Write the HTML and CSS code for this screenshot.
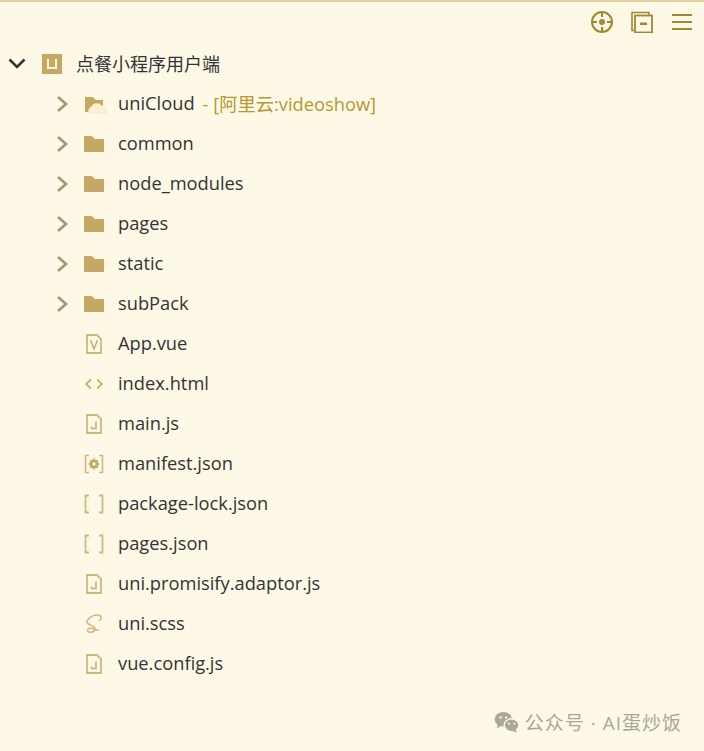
FILE: index.html
```html
<!DOCTYPE html>
<html lang="en">
<head>
    <meta charset="UTF-8">
    <meta name="viewport" content="width=device-width, initial-scale=1.0">
    <title>Project tree</title>
    <link rel="stylesheet" href="styles.css">
</head>
<body>

<svg class="defs" width="0" height="0">
    <symbol id="chev" viewBox="0 0 14 18"><path d="M3 2l8 7-8 7" fill="none" stroke="currentColor" stroke-width="2.6"/></symbol>
    <symbol id="folder" viewBox="0 0 20 16"><path d="M0 0h8l3 3h9v13H0z" fill="#c4a863"/></symbol>
    <symbol id="cloud" viewBox="0 0 24 24"><path d="M1 5h8l3 3h7v6H8v6H1z" fill="#c4a863"/><path d="M6.500 21c-2.500-.5-2.500-4.500 .5-5.500 1-4 8.500-5.500 10.500-1.500 3-.5 5 3 4.500 7z" fill="#fbf2d0" stroke="#f3e8c4"/></symbol>
    <symbol id="vue" viewBox="0 0 18 20"><path d="M2 1h10l4 4v14H2z" fill="none" stroke="#cfb87f" stroke-width="1.8"/><path d="M5.500 6l3.500 9 3.500-9" fill="none" stroke="#c9b06f" stroke-width="1.500"/></symbol>
    <symbol id="code" viewBox="0 0 20 12"><path d="M7 1.500L2 6l5 4.500M13 1.500L18 6l-5 4.500" fill="none" stroke="#c9b06f" stroke-width="1.800"/></symbol>
    <symbol id="js" viewBox="0 0 18 20"><path d="M2 1h10l4 4v14H2z" fill="none" stroke="#cfb87f" stroke-width="1.800"/><path d="M11 7.500v7H6.500v-2" fill="none" stroke="#c9b06f" stroke-width="1.600"/></symbol>
    <symbol id="gear" viewBox="0 0 20 20"><path d="M5 1.500H1.500v17H5M15 1.500h3.500v17H15" fill="none" stroke="#cfb87f" stroke-width="1.600"/><circle cx="10" cy="10" r="3.200" fill="none" stroke="#c4a863" stroke-width="2.800"/><path d="M10 4.500v2M10 13.500v2M4.800 10h2M13.200 10h2M6.300 6.300l1.400 1.400M12.300 12.300l1.400 1.400M6.300 13.700l1.400-1.400M12.300 7.700l1.400-1.400" stroke="#c4a863" stroke-width="1.600"/></symbol>
    <symbol id="json" viewBox="0 0 20 20"><path d="M5 1.500H1.500v17H5M15 1.500h3.500v17H15" fill="none" stroke="#cfb87f" stroke-width="1.800"/></symbol>
    <symbol id="sass" viewBox="0 0 20 20"><path d="M15 7C19 4 17 1 13 1 8 1 3 5 3 8c0 3 7 3 8 6 1 3-4 5-6 4-3-1-1-4 2-4 3 0 5 3 8 2" fill="none" stroke="#cfb87f" stroke-width="1.500"/></symbol>
</svg>

<div class="panel">
    <!-- Toolbar -->
    <div class="toolbar">
        <svg class="tool" width="24" height="24" viewBox="0 0 24 24">
            <circle cx="12" cy="12" r="10" fill="none" stroke="#a08732" stroke-width="2"/>
            <circle cx="12" cy="12" r="3" fill="#a08732"/>
            <path d="M12 2v5M12 17v5M2 12h5M17 12h5" stroke="#a08732" stroke-width="2"/>
        </svg>
        <svg class="tool tool-docs" width="22" height="22" viewBox="0 0 22 22">
            <path d="M4.500 19.500h-3.500v-18h17v3" fill="none" stroke="#a08732" stroke-width="1.600"/>
            <rect x="4" y="4.500" width="17" height="17" fill="none" stroke="#a08732" stroke-width="1.800"/>
            <rect x="9" y="11.500" width="7" height="2.500" fill="#a08732"/>
        </svg>
        <svg class="tool" width="20" height="18" viewBox="0 0 20 18">
            <path d="M0 2h20M0 9h20M0 16h20" stroke="#a08732" stroke-width="2.200"/>
        </svg>
    </div>

    <!-- Project root -->
    <div class="row root">
        <svg class="arrow arrow-open" width="18" height="12" viewBox="0 0 18 12"><path d="M1.500 1.500L9 9l7.500-7.500" fill="none" stroke="#333" stroke-width="2.600"/></svg>
        <span class="project-icon"><span class="project-letter"></span></span>
        <span class="project-name">点餐小程序用户端</span>
    </div>

    <!-- Folders -->
    <div class="row">
        <svg class="arrow"><use href="#chev"/></svg>
        <svg class="icon icon-cloud"><use href="#cloud"/></svg>
        <span>uniCloud</span>
        <span class="tag">- [阿里云:videoshow]</span>
    </div>
    <div class="row">
        <svg class="arrow"><use href="#chev"/></svg>
        <svg class="icon"><use href="#folder"/></svg>
        <span>common</span>
    </div>
    <div class="row">
        <svg class="arrow"><use href="#chev"/></svg>
        <svg class="icon"><use href="#folder"/></svg>
        <span>node_modules</span>
    </div>
    <div class="row">
        <svg class="arrow"><use href="#chev"/></svg>
        <svg class="icon"><use href="#folder"/></svg>
        <span>pages</span>
    </div>
    <div class="row">
        <svg class="arrow"><use href="#chev"/></svg>
        <svg class="icon"><use href="#folder"/></svg>
        <span>static</span>
    </div>
    <div class="row">
        <svg class="arrow"><use href="#chev"/></svg>
        <svg class="icon"><use href="#folder"/></svg>
        <span>subPack</span>
    </div>

    <!-- Files -->
    <div class="row file"><svg class="icon"><use href="#vue"/></svg><span>App.vue</span></div>
    <div class="row file"><svg class="icon"><use href="#code"/></svg><span>index.html</span></div>
    <div class="row file"><svg class="icon"><use href="#js"/></svg><span>main.js</span></div>
    <div class="row file"><svg class="icon"><use href="#gear"/></svg><span>manifest.json</span></div>
    <div class="row file"><svg class="icon"><use href="#json"/></svg><span>package-lock.json</span></div>
    <div class="row file"><svg class="icon"><use href="#json"/></svg><span>pages.json</span></div>
    <div class="row file"><svg class="icon"><use href="#js"/></svg><span>uni.promisify.adaptor.js</span></div>
    <div class="row file"><svg class="icon"><use href="#sass"/></svg><span>uni.scss</span></div>
    <div class="row file"><svg class="icon"><use href="#js"/></svg><span>vue.config.js</span></div>

    <!-- Watermark -->
    <div class="watermark">
        <svg width="26" height="22" viewBox="0 0 28 24">
            <ellipse cx="10" cy="9" rx="9.500" ry="8" fill="#aaa89b"/>
            <path d="M4 14l-1 5 5-3z" fill="#aaa89b"/>
            <ellipse cx="19" cy="15.500" rx="8" ry="7" fill="#aaa89b" stroke="#fef9e7" stroke-width="1.500"/>
            <path d="M23 20l2 3.500-5-1.500z" fill="#aaa89b"/>
            <circle cx="7" cy="7" r="1.300" fill="#fef9e7"/>
            <circle cx="13" cy="7" r="1.300" fill="#fef9e7"/>
            <circle cx="16" cy="14" r="1.100" fill="#fef9e7"/>
            <circle cx="22" cy="14" r="1.100" fill="#fef9e7"/>
        </svg>
        <span>公众号 · AI蛋炒饭</span>
    </div>
</div>

</body>
</html>
```

FILE: styles.css
```css
* {
    box-sizing: border-box;
    margin: 0;
    padding: 0;
}

body {
    font-family: "Open Sans", "Noto Sans CJK SC", sans-serif;
    background-color: #fef9e7;
    color: #333;
}

.defs {
    position: absolute;
}

.panel {
    position: relative;
    height: 751px;
    border-top: 2px solid #e0cfa0;
    overflow: hidden;
}

/* Toolbar */
.toolbar {
    display: flex;
    justify-content: flex-end;
    align-items: center;
    gap: 18px;
    height: 40px;
    padding-right: 12px;
}

.tool-docs {
    margin: 0 1px 0 -1px;
}

/* Tree rows */
.row {
    display: flex;
    align-items: center;
    height: 40px;
    padding-left: 55px;
    font-size: 18.3px;
    white-space: nowrap;
}

.row > span {
    margin-bottom: 3px;
}

.root {
    height: 42px;
    padding-top: 2px;
    padding-left: 8px;
}

.file {
    padding-left: 84px;
}

.arrow {
    width: 14px;
    height: 18px;
    margin-right: 15px;
    flex: none;
}

.row .arrow {
    color: #a39577;
}

.arrow-open {
    width: 18px;
    height: 12px;
    margin-right: 16px;
}

.icon {
    width: 20px;
    height: 20px;
    margin-right: 14px;
    flex: none;
}

.icon-cloud {
    width: 24px;
    height: 24px;
    margin-right: 10px;
}

.row > .project-icon {
    display: flex;
    align-items: center;
    justify-content: center;
    width: 20px;
    height: 20px;
    margin: 0 14px 0 0;
    background-color: #c4a863;
}

.project-letter {
    width: 10px;
    height: 10px;
    border: 2px solid #fdf6dc;
    border-top: 0;
}

.row > .project-name {
    font-size: 18px;
    margin-bottom: 2px;
}

.row > .tag {
    margin-left: 8px;
    color: #b5982e;
}

/* Watermark */
.watermark {
    position: absolute;
    right: 22px;
    bottom: 15px;
    display: flex;
    align-items: center;
    gap: 5px;
    color: #a9a79b;
    font-size: 19px;
    letter-spacing: 1px;
}
```
